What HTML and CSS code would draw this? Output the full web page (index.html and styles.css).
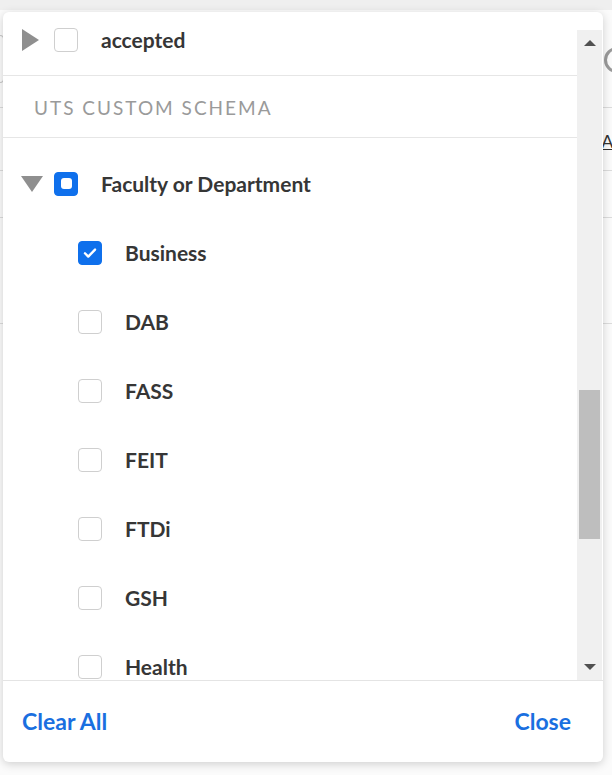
FILE: index.html
```html
<!DOCTYPE html>
<html>
<head>
<meta charset="utf-8">
<link rel="stylesheet" href="styles.css">
</head>
<body>
<div class="page">
  <div class="page-top"></div>
  <div class="page-head"><div class="page-input"></div><div class="page-ring"></div></div>
  <div class="page-row h63"><span class="page-link">All</span></div>
  <div class="page-row h47"></div>
  <div class="page-row h106"></div>
</div>

<div class="modal">
  <div class="modal-body">
    <div class="list">
      <div class="row first">
        <span class="caret caret-right"></span>
        <span class="cb"></span>
        <span class="label">accepted</span>
      </div>
      <div class="section">UTS CUSTOM SCHEMA</div>
      <div class="group">
        <div class="row">
          <span class="caret caret-down"></span>
          <span class="cb cb-partial"><span class="dot"></span></span>
          <span class="label">Faculty or Department</span>
        </div>
        <div class="row child">
          <span class="cb cb-checked"><svg viewBox="0 0 24 24" width="24" height="24"><path d="M6.5 12.3l3.6 3.6 7.4-7.6" fill="none" stroke="#fff" stroke-width="2.6" stroke-linecap="round" stroke-linejoin="round"/></svg></span>
          <span class="label">Business</span>
        </div>
        <div class="row child"><span class="cb"></span><span class="label">DAB</span></div>
        <div class="row child"><span class="cb"></span><span class="label">FASS</span></div>
        <div class="row child"><span class="cb"></span><span class="label">FEIT</span></div>
        <div class="row child"><span class="cb"></span><span class="label">FTDi</span></div>
        <div class="row child"><span class="cb"></span><span class="label">GSH</span></div>
        <div class="row child"><span class="cb"></span><span class="label">Health</span></div>
      </div>
    </div>
    <div class="scrollbar">
      <div class="sb-btn"><span class="sb-arrow up"></span></div>
      <div class="sb-track"><div class="sb-thumb"></div></div>
      <div class="sb-btn"><span class="sb-arrow down"></span></div>
    </div>
  </div>
  <div class="modal-footer">
    <a class="link">Clear All</a>
    <a class="link">Close</a>
  </div>
</div>
</body>
</html>
```
FILE: styles.css
```css
* { box-sizing: border-box; }
html, body { margin: 0; padding: 0; }
body {
  width: 612px;
  height: 775px;
  overflow: hidden;
  background: #fbfbfb;
  font-family: Lato, "Open Sans", "Liberation Sans", sans-serif;
  position: relative;
}

/* background page */
.page { width: 612px; overflow: hidden; }
.page-top { height: 10px; background: #efefef; }
.page-head {
  height: 98px;
  border-bottom: 1px solid #dcdcdc;
  padding-top: 25px;
  display: flex;
  justify-content: space-between;
  align-items: flex-start;
}
.page-input { width: 4px; height: 48px; border: 1px solid #c8c8c8; border-left: none; border-radius: 0 4px 4px 0; }
.page-ring {
  width: 26px;
  height: 26px;
  margin-top: 12px;
  margin-right: -18px;
  border: 3px solid #9a9a9a;
  border-radius: 50%;
  flex: none;
}
.page-row { border-bottom: 1px solid #dcdcdc; }
.h63 {
  height: 63px;
  display: flex;
  justify-content: flex-end;
  align-items: center;
}
.page-link {
  font-size: 18px;
  color: #333;
  text-decoration: underline;
  margin-right: -10px;
  margin-top: 4px;
}
.h47 { height: 47px; }
.h106 { height: 106px; }

/* modal */
.modal {
  position: absolute;
  left: 3px;
  top: 12px;
  width: 600px;
  height: 750px;
  background: #fff;
  border-radius: 6px;
  box-shadow: 0 2px 10px rgba(0,0,0,0.18);
  display: flex;
  flex-direction: column;
  overflow: hidden;
}
.modal-body {
  display: flex;
  height: 669px;
  border-bottom: 1px solid #e4e4e4;
}
.list {
  flex: 1;
  overflow: hidden;
}
.row {
  display: flex;
  align-items: center;
  height: 69px;
  padding-left: 19px;
  color: #333;
}
.row.first {
  height: 72px;
  margin-top: -8px;
  border-bottom: 1px solid #e6e6e6;
}
.row.child { padding-left: 75px; }
.caret {
  display: inline-block;
  flex: none;
}
.caret-right {
  width: 0; height: 0;
  border-top: 11px solid transparent;
  border-bottom: 11px solid transparent;
  border-left: 17px solid #8f8f8f;
  margin-right: 15px;
}
.caret-down {
  width: 0; height: 0;
  border-left: 11px solid transparent;
  border-right: 11px solid transparent;
  border-top: 16px solid #8f8f8f;
  margin-left: -1px;
  margin-right: 11px;
}
.cb {
  width: 24px;
  height: 24px;
  border: 1px solid #cfcfcf;
  border-radius: 4px;
  background: #fff;
  flex: none;
  display: flex;
  align-items: center;
  justify-content: center;
}
.cb-checked, .cb-partial {
  background: #0f70ec;
  border-color: #0f70ec;
}
.cb svg { display: block; }
.dot {
  width: 11px;
  height: 11px;
  border-radius: 3px;
  background: #fff;
}
.label {
  margin-left: 23px;
  font-size: 21px;
  font-weight: 700;
  color: #363636;
}
.section {
  height: 62px;
  border-bottom: 1px solid #e6e6e6;
  display: flex;
  align-items: center;
  padding-left: 31px;
  padding-top: 1px;
  font-size: 19px;
  letter-spacing: 2px;
  color: #9a9a9a;
}
.group { padding-top: 11px; }

/* scrollbar */
.scrollbar {
  width: 25px;
  margin-top: 18px;
  margin-right: 1px;
  background: #f0f0f0;
  display: flex;
  flex-direction: column;
}
.sb-btn {
  height: 26px;
  display: flex;
  align-items: center;
  justify-content: center;
}
.sb-arrow { width: 0; height: 0; }
.sb-arrow.up {
  border-left: 6px solid transparent;
  border-right: 6px solid transparent;
  border-bottom: 6px solid #505050;
}
.sb-arrow.down {
  border-left: 6px solid transparent;
  border-right: 6px solid transparent;
  border-top: 6px solid #505050;
}
.sb-track { flex: 1; }
.sb-thumb {
  margin: 334px 2px 0 2px;
  height: 149px;
  background: #bebebe;
}

/* footer */
.modal-footer {
  flex: 1;
  display: flex;
  align-items: center;
  justify-content: space-between;
  padding: 0 32px 2px 19px;
}
.link {
  font-size: 23px;
  font-weight: 700;
  color: #1a6fe0;
  cursor: pointer;
}
```
